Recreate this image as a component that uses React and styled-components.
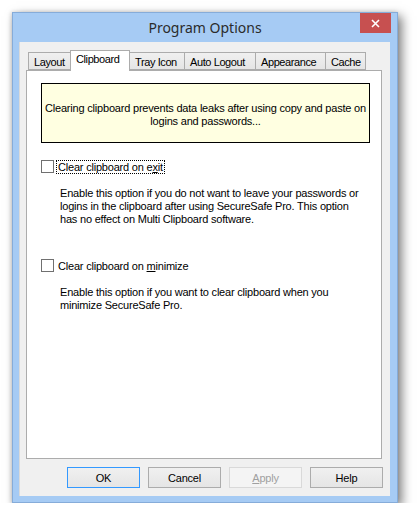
import React from "react"
import styled, { createGlobalStyle } from "styled-components"

const GlobalStyle = createGlobalStyle`
  html, body {
    margin: 0;
    padding: 0;
    background: #ffffff;
  }
  body {
    font-family: "Liberation Sans", Arial, sans-serif;
    font-size: 11px;
    letter-spacing: -0.2px;
    color: #000;
  }
`

const Page = styled.div`
  padding: 12px 0 0 12px;
`

const Window = styled.div`
  width: 386px;
  height: 491px;
  box-sizing: border-box;
  background: #a6cbf4;
  border: 1px solid #86acd9;
  box-shadow: 4px 4px 10px rgba(0, 0, 0, 0.5), -1px 0 4px rgba(0, 0, 0, 0.15);
  display: flex;
  flex-direction: column;
`

const TitleBar = styled.div`
  height: 29px;
  display: grid;
  grid-template-columns: 1fr auto 1fr;
  align-items: start;
`

const Title = styled.div`
  grid-column: 2;
  font-family: "Noto Sans", "Open Sans", sans-serif;
  font-size: 14px;
  letter-spacing: 0;
  line-height: 30px;
  color: #2b2b2b;
`

const CloseButton = styled.div`
  grid-column: 3;
  justify-self: end;
  margin-right: 6px;
  width: 31px;
  height: 20px;
  background: #c75050;
  display: flex;
  align-items: center;
  justify-content: center;
`

const Client = styled.div`
  flex: 1;
  margin: 0 7px 6px 6px;
  background: #f0f0f0;
  border-left: 1px solid #dadada;
  padding: 8px 7px 8px 6px;
  display: flex;
  flex-direction: column;
`

const TabRow = styled.div`
  display: flex;
  align-items: flex-end;
  height: 20px;
  padding-left: 2px;
  position: relative;
  z-index: 1;
`

const Tab = styled.div`
  width: ${p => p.$w}px;
  box-sizing: border-box;
  height: ${p => (p.$active ? 21 : 18)}px;
  margin-left: -1px;
  margin-bottom: ${p => (p.$active ? -1 : 0)}px;
  border: 1px solid #acacac;
  border-bottom: ${p => (p.$active ? "none" : "1px solid #acacac")};
  background: ${p => (p.$active ? "#ffffff" : "linear-gradient(#f0f0f0, #e5e5e5)")};
  position: relative;
  z-index: ${p => (p.$active ? 2 : 1)};
  padding-left: 5px;
  padding-top: ${p => (p.$active ? 2 : 3)}px;
  line-height: 13px;
  letter-spacing: -0.4px;
  white-space: nowrap;
  &:first-child {
    margin-left: 0;
  }
`

const Panel = styled.div`
  height: 389px;
  box-sizing: border-box;
  border: 1px solid #acacac;
  background: #ffffff;
  margin-right: 1px;
  padding: 12px 0 0 14px;
`

const InfoBox = styled.div`
  width: 329px;
  height: 60px;
  box-sizing: border-box;
  border: 1px solid #000;
  background: #ffffe1;
  display: flex;
  align-items: center;
  justify-content: center;
  text-align: center;
  line-height: 13px;
  padding: 4px 0 0;
  white-space: nowrap;
`

const Option = styled.div`
  margin-top: ${p => p.$top}px;
`

const CheckRow = styled.div`
  display: flex;
  align-items: center;
  height: 15px;
`

const CheckBox = styled.span`
  width: 13px;
  height: 13px;
  box-sizing: border-box;
  border: 1px solid #707070;
  background: #ffffff;
  margin-right: 2px;
`

const CheckLabel = styled.span`
  line-height: 12px;
  padding: 0 1px;
  border: 1px dotted ${p => (p.$focus ? "#000" : "transparent")};
`

const Key = styled.span`
  text-decoration: underline;
  text-underline-offset: 1px;
`

const Description = styled.div`
  margin: 13px 0 0 19px;
  line-height: 13px;
  width: 304px;
`

const ButtonRow = styled.div`
  display: flex;
  justify-content: flex-end;
  gap: 8px;
  margin-top: 8px;
`

const Button = styled.div`
  width: 73px;
  height: 21px;
  box-sizing: border-box;
  border: 1px solid ${p => (p.$default ? "#3399ff" : p.$disabled ? "#d9d9d9" : "#acacac")};
  background: ${p => (p.$disabled ? "#f4f4f4" : "linear-gradient(#f0f0f0, #e5e5e5)")};
  color: ${p => (p.$disabled ? "#a0a0a0" : "#000")};
  display: flex;
  align-items: center;
  justify-content: center;
`

const tabs = [
  { label: "Layout", w: 43 },
  { label: "Clipboard", w: 60, active: true },
  { label: "Tray Icon", w: 56 },
  { label: "Auto Logout", w: 72 },
  { label: "Appearance", w: 71 },
  { label: "Cache", w: 41 },
]

const App = () => (
  <>
    <GlobalStyle />
    <Page>
      <Window>
        <TitleBar>
          <Title>Program Options</Title>
          <CloseButton>
            <svg width="9" height="9" viewBox="0 0 9 9">
              <path d="M1 1L8 8M8 1L1 8" stroke="#fff" strokeWidth="1.6" />
            </svg>
          </CloseButton>
        </TitleBar>
        <Client>
          <TabRow>
            {tabs.map(t => (
              <Tab key={t.label} $w={t.w} $active={t.active}>
                {t.label}
              </Tab>
            ))}
          </TabRow>
          <Panel>
            <InfoBox>
              Clearing clipboard prevents data leaks after using copy and paste on
              <br />
              logins and passwords...
            </InfoBox>
            <Option $top={16}>
              <CheckRow>
                <CheckBox />
                <CheckLabel $focus>
                  Clear clipboard on e<Key>x</Key>it
                </CheckLabel>
              </CheckRow>
              <Description>
                Enable this option if you do not want to leave your passwords or
                logins in the clipboard after using SecureSafe Pro. This option
                has no effect on Multi Clipboard software.
              </Description>
            </Option>
            <Option $top={32}>
              <CheckRow>
                <CheckBox />
                <CheckLabel>
                  Clear clipboard on <Key>m</Key>inimize
                </CheckLabel>
              </CheckRow>
              <Description>
                Enable this option if you want to clear clipboard when you
                minimize SecureSafe Pro.
              </Description>
            </Option>
          </Panel>
          <ButtonRow>
            <Button $default>OK</Button>
            <Button>Cancel</Button>
            <Button $disabled>
              <span>
                <Key>A</Key>pply
              </span>
            </Button>
            <Button>Help</Button>
          </ButtonRow>
        </Client>
      </Window>
    </Page>
  </>
)

export default App
